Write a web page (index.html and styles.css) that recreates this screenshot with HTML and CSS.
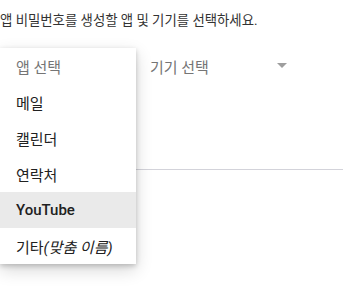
FILE: index.html
```html
<!DOCTYPE html>
<html lang="ko">
<head>
  <meta charset="UTF-8" />
  <meta name="viewport" content="width=device-width, initial-scale=1" />
  <title>앱 비밀번호</title>
  <link rel="stylesheet" href="styles.css">
</head>
<body>
  <p class="intro">앱 비밀번호를 생성할 앱 및 기기를 선택하세요.</p>

  <div class="form">
    <div class="selects">
      <div class="select app-select">앱 선택</div>
      <div class="select device-select">
        <span>기기 선택</span>
        <span class="caret"></span>
      </div>
    </div>
    <div class="name-field"></div>

    <ul class="menu">
      <li class="menu-item placeholder">앱 선택</li>
      <li class="menu-item">메일</li>
      <li class="menu-item">캘린더</li>
      <li class="menu-item">연락처</li>
      <li class="menu-item active">YouTube</li>
      <li class="menu-item">기타<em>(맞춤 이름)</em></li>
    </ul>
  </div>
</body>
</html>
```

FILE: styles.css
```css
body {
  margin: 0;
  min-height: 100vh;
  background: #fff;
  font-family: Roboto, "Noto Sans CJK KR", sans-serif;
  color: #212121;
}

.intro {
  margin: 0;
  padding-top: 13px;
  font-size: 13.4px;
  line-height: 16px;
  color: #333;
}

.form {
  position: relative;
  margin-top: 19px;
  min-height: 230px;
}

.selects {
  display: flex;
  align-items: center;
  height: 36px;
}

.select {
  font-size: 15px;
  color: #757575;
}

.app-select {
  width: 136px;
  padding-left: 16px;
  box-sizing: border-box;
}

.device-select {
  display: flex;
  align-items: center;
  justify-content: space-between;
  width: 137px;
  margin-left: 14px;
}

.caret {
  width: 0;
  height: 0;
  border-left: 5px solid transparent;
  border-right: 5px solid transparent;
  border-top: 5px solid #9e9e9e;
  margin-top: -2px;
}

.name-field {
  height: 85px;
  border-bottom: 1px solid #d3d3da;
}

.menu {
  position: absolute;
  top: 0;
  left: 0;
  z-index: 2;
  width: 136px;
  margin: 0;
  padding: 0;
  list-style: none;
  background: #fff;
  box-shadow: 0 2px 5px rgba(0, 0, 0, 0.2), 0 6px 16px rgba(0, 0, 0, 0.16);
}

.menu-item {
  height: 36px;
  display: flex;
  align-items: center;
  padding-left: 16px;
  font-size: 15px;
  color: #212121;
}

.menu-item em {
  font-style: italic;
}

.placeholder {
  color: #757575;
}

.active {
  background: #eaeaea;
  font-weight: 500;
}
```
